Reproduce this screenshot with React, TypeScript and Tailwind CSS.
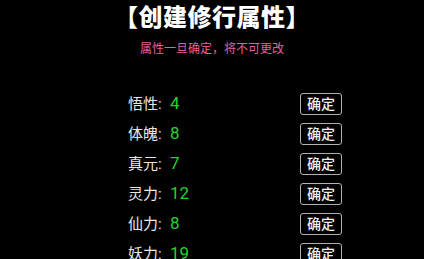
import React from 'react';

const attrs = [
    { name: '悟性', value: 4 },
    { name: '体魄', value: 8 },
    { name: '真元', value: 7 },
    { name: '灵力', value: 12 },
    { name: '仙力', value: 8 },
    { name: '妖力', value: 19 },
];

export default function App() {
    return (
        <div
            className="w-[424px] h-[259px] overflow-hidden bg-black text-white"
            style={{ fontFamily: 'Roboto, "Noto Sans CJK SC", sans-serif' }}
        >
            <h1 className="pt-[3px] text-center text-[24px] leading-[30px] font-black tracking-[0.5px]">【创建修行属性】</h1>
            <p className="mt-[8px] text-center text-[12px] leading-[16px] text-[#e3609c]">
                属性一旦确定，将不可更改
            </p>

            <div className="mt-[32px] pl-[128px] pr-[82px] flex flex-col">
                {attrs.map(a => (
                    <div key={a.name} className="h-[30px] flex items-center justify-between">
                        <div className="flex items-center text-[15px]">
                            <span className="w-[42px] text-[#e6e6e6]">{a.name}:</span>
                            <span className="text-[17px] text-[#22d42a]">{a.value}</span>
                        </div>
                        <button className="w-[42px] h-[22px] rounded-[3px] border border-[#b0b0b0] text-[14px] font-medium leading-none text-[#f2f2f2]">
                            确定
                        </button>
                    </div>
                ))}
            </div>
        </div>
    );
}
